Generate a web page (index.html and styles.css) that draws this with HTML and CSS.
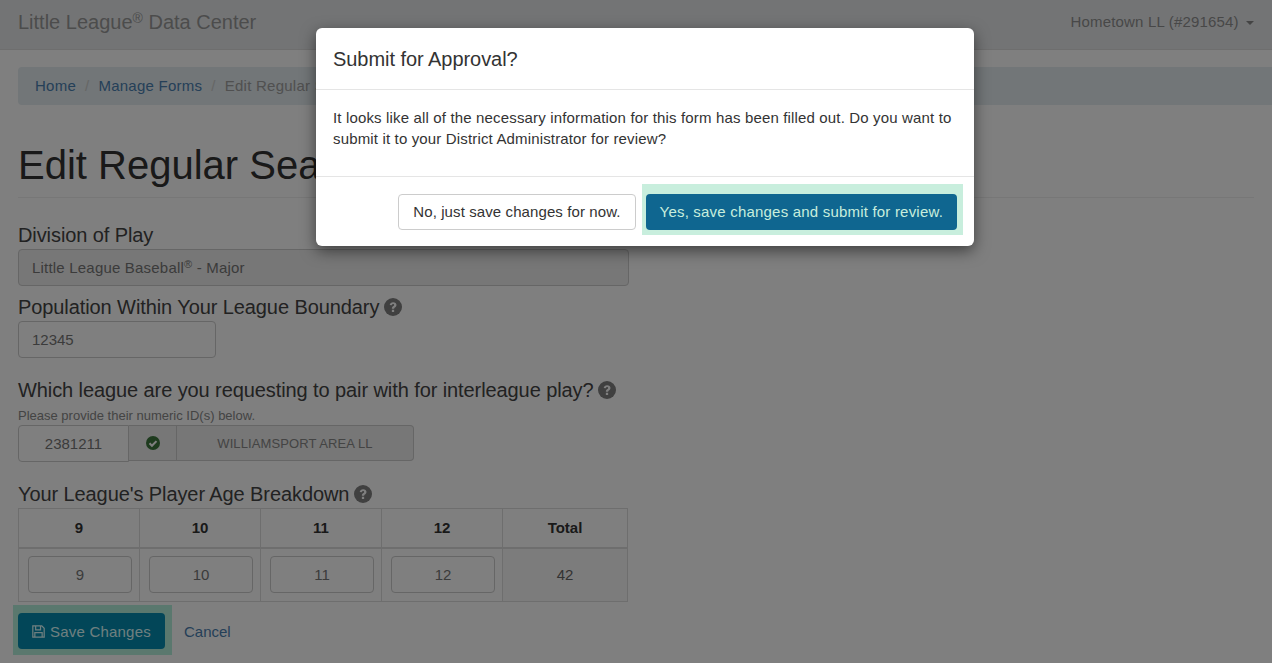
FILE: index.html
```html
<!DOCTYPE html>
<html lang="en">
<head>
<meta charset="utf-8">
<title>Little League Data Center</title>
<link rel="stylesheet" href="styles.css">
</head>
<body>
<nav class="navbar">
  <a class="brand">Little League<sup class="reg">®</sup> Data Center</a>
  <a class="account">Hometown LL (#291654) <span class="caret"></span></a>
</nav>
<main class="page">
  <ol class="breadcrumb">
    <li><a>Home</a></li>
    <li class="sep">/</li>
    <li><a>Manage Forms</a></li>
    <li class="sep">/</li>
    <li class="current">Edit Regular Season Form</li>
  </ol>
  <h1 class="title">Edit Regular Season Form</h1>
  <form class="form">
    <div class="field field-division">
      <label class="label">Division of Play</label>
      <div class="control control-wide disabled">Little League Baseball<sup class="reg-small">®</sup> - Major</div>
    </div>
    <div class="field field-pop">
      <label class="label">Population Within Your League Boundary <svg class="help" viewBox="0 0 24 24"><use href="#q"/></svg></label>
      <div class="control control-pop">12345</div>
    </div>
    <div class="field field-pair">
      <label class="label">Which league are you requesting to pair with for interleague play? <svg class="help" viewBox="0 0 24 24"><use href="#q"/></svg></label>
      <p class="hint">Please provide their numeric ID(s) below.</p>
      <div class="group">
        <div class="control group-id">2381211</div>
        <div class="group-icon"><svg class="check" viewBox="0 0 24 24"><circle cx="12" cy="12" r="12" fill="#3c763d"/><path d="M6 12.500l4.200 4.200L18 8.800" fill="none" stroke="#fff" stroke-width="3.600"/></svg></div>
        <div class="group-name">WILLIAMSPORT AREA LL</div>
      </div>
    </div>
    <div class="field field-age">
      <label class="label">Your League's Player Age Breakdown <svg class="help" viewBox="0 0 24 24"><use href="#q"/></svg></label>
      <table class="ages">
        <thead><tr><th>9</th><th>10</th><th>11</th><th>12</th><th class="total">Total</th></tr></thead>
        <tbody><tr>
          <td><div class="control cell">9</div></td>
          <td><div class="control cell">10</div></td>
          <td><div class="control cell">11</div></td>
          <td><div class="control cell">12</div></td>
          <td class="total">42</td>
        </tr></tbody>
      </table>
    </div>
    <div class="actions">
      <button type="button" class="btn-save"><svg class="save" viewBox="0 0 16 16"><path d="M1 1h11l3 3v11H1z M4.500 1v5h6V1 M3.500 15V9.500h9V15" fill="none" stroke="currentColor" stroke-width="1.500"/></svg>Save Changes</button>
      <a class="cancel">Cancel</a>
    </div>
  </form>
</main>
<div class="backdrop"></div>
<div class="modal">
  <h4 class="modal-title">Submit for Approval?</h4>
  <p class="modal-body">It looks like all of the necessary information for this form has been filled out. Do you want to submit it to your District Administrator for review?</p>
  <div class="modal-footer">
    <button type="button" class="btn-no">No, just save changes for now.</button>
    <button type="button" class="btn-yes">Yes, save changes and submit for review.</button>
  </div>
</div>
<svg class="defs" width="0" height="0"><defs>
  <g id="q"><circle cx="12" cy="12" r="12" fill="currentColor"/><path d="M7.600 9.400c.3-2.400 2.200-3.900 4.600-3.900 2.600 0 4.500 1.600 4.500 3.800 0 2.900-3.200 3-3.200 5h-3c0-3.400 3-3.400 3-4.900 0-.8-.6-1.300-1.400-1.300-.9 0-1.400.5-1.600 1.500z M10.500 15.600h3v3h-3z" fill="#fff"/></g>
</defs></svg>
</body>
</html>
```
FILE: styles.css
```css
* { box-sizing: border-box; }
html, body { margin: 0; height: 663px; overflow: hidden; }
body { font-family: "Liberation Sans", Arial, sans-serif; font-size: 15px; line-height: 21px; color: #333; background: #fff; position: relative; }
.navbar { height: 50px; background: #e7e9eb; border-bottom: 1px solid #ddd; display: flex; justify-content: space-between; align-items: center; padding: 0 18px 6px; }
.brand { font-size: 20px; color: #999; line-height: 20px; }
.reg { font-size: 14px; line-height: 0; vertical-align: 6px; }
.account { font-size: 15px; color: #909090; letter-spacing: 0.17px; }
.caret { display: inline-block; width: 0; height: 0; margin-left: 3px; vertical-align: middle; border-top: 4px solid #888; border-left: 4px solid transparent; border-right: 4px solid transparent; }
.page { padding: 17px 18px 0; }
.breadcrumb { list-style: none; margin: 0 -18px 0 0; padding: 7px 17px 9px; height: 38px; background: #e4ecf0; border-radius: 4px 0 0 4px; display: flex; gap: 9px; align-items: center; letter-spacing: 0.25px; }
.breadcrumb a { color: #4a80b0; }
.sep { color: #ccc; }
.current { color: #a0a0a0; }
.title { font-size: 40px; font-weight: 400; line-height: 44px; margin: 38px 0 0; padding-bottom: 10px; border-bottom: 1px solid #eee; color: #333; }
.form { display: block; position: relative; z-index: 0; }
.label { display: block; font-size: 20px; line-height: 22px; font-weight: 400; color: #444; letter-spacing: -0.09px; }
.help { width: 18px; height: 18px; color: #808080; vertical-align: -2px; margin-left: -1px; }
.field-division { margin-top: 26px; }
.control { border: 1px solid #ccc; border-radius: 4px; height: 37px; background: #fff; color: #777; font-size: 15px; line-height: 35px; padding: 0 13px; }
.control-wide { width: 611px; margin-top: 3px; letter-spacing: 0.2px; }
.disabled { background: #eee; }
.reg-small { font-size: 11px; line-height: 0; vertical-align: 5px; }
.field-pop { margin-top: 10px; }
.control-pop { width: 198px; margin-top: 3px; }
.field-pair { margin-top: 21px; }
.hint { margin: 7px 0 0; font-size: 13px; line-height: 15px; color: #888; }
.group { display: flex; width: 396px; height: 37px; margin-top: 2px; }
.group-id { width: 111px; text-align: center; border-radius: 4px 0 0 4px; padding: 0; flex: none; }
.group-icon { width: 48px; height: 36px; flex: none; background: #eee; border: 1px solid #ccc; border-left: 0; display: flex; align-items: center; justify-content: center; }
.check { width: 14px; height: 14px; }
.group-name { flex: 1; height: 36px; background: #eee; border: 1px solid #ccc; border-left: 0; border-radius: 0 4px 4px 0; color: #888; font-size: 13px; letter-spacing: 0.1px; line-height: 36px; text-align: center; }
.field-age { margin-top: 21px; }
.ages { border-collapse: collapse; width: 610px; margin-top: 3px; table-layout: fixed; }
.ages th, .ages td { border: 1px solid #ddd; text-align: center; padding: 0; }
.ages th { height: 39px; font-weight: 700; color: #333; }
.ages thead th { border-bottom-width: 2px; }
.ages td { height: 54px; padding: 0 7px 0 9px; }
.ages th:nth-child(-n+4), .ages td:nth-child(-n+4) { width: 121px; }
.ages td.total { background: #f9f9f9; padding: 0; color: #666; }
.cell { height: 37px; width: 104px; padding: 0; text-align: center; }
.actions { display: flex; align-items: center; gap: 19px; margin-top: 11px; }
.btn-save { position: relative; width: 147px; height: 36px; border: 0; border-radius: 4px; background: #048cb0; color: #dfffff; font: 15px "Liberation Sans", Arial, sans-serif; letter-spacing: 0.2px; padding: 0; display: flex; align-items: center; justify-content: center; }
.btn-save::before { content: ""; position: absolute; inset: -8px -7px -6px -5px; background: #b4f0dc; z-index: -1; }
.save { width: 13px; height: 13px; margin-right: 5px; }
.cancel { color: #4a80b0; }
.backdrop { position: absolute; inset: 0; background: rgba(0, 0, 0, 0.5); }
.modal { position: absolute; left: 316px; top: 28px; width: 658px; height: 218px; background: #fff; border-radius: 6px; box-shadow: 0 5px 15px rgba(0, 0, 0, 0.5); }
.modal-title { margin: 0; font-size: 20px; font-weight: 400; line-height: 22px; padding: 20px 17px 19px; border-bottom: 1px solid #e5e5e5; height: 62px; letter-spacing: -0.05px; }
.modal-body { margin: 0; padding: 17px 17px; height: 87px; border-bottom: 1px solid #e5e5e5; font-size: 15px; letter-spacing: 0.155px; }
.modal-footer { display: flex; justify-content: flex-end; gap: 10px; padding: 17px 17px 0; }
.btn-no, .btn-yes { height: 36px; border-radius: 4px; font: 15px "Liberation Sans", Arial, sans-serif; padding: 0 14px 2px; }
.btn-no { background: #fff; border: 1px solid #ccc; color: #333; letter-spacing: 0.1px; }
.btn-yes { position: relative; z-index: 0; background: #0f6690; border: 0; color: #c8eedd; letter-spacing: 0.2px; }
.btn-yes::before { content: ""; position: absolute; inset: -10px -6px -5px -4px; background: #c8eedd; z-index: -2; }
.btn-yes::after { content: ""; position: absolute; inset: 0; background: #0f6690; border-radius: 4px; z-index: -1; }
.defs { position: absolute; }
```
